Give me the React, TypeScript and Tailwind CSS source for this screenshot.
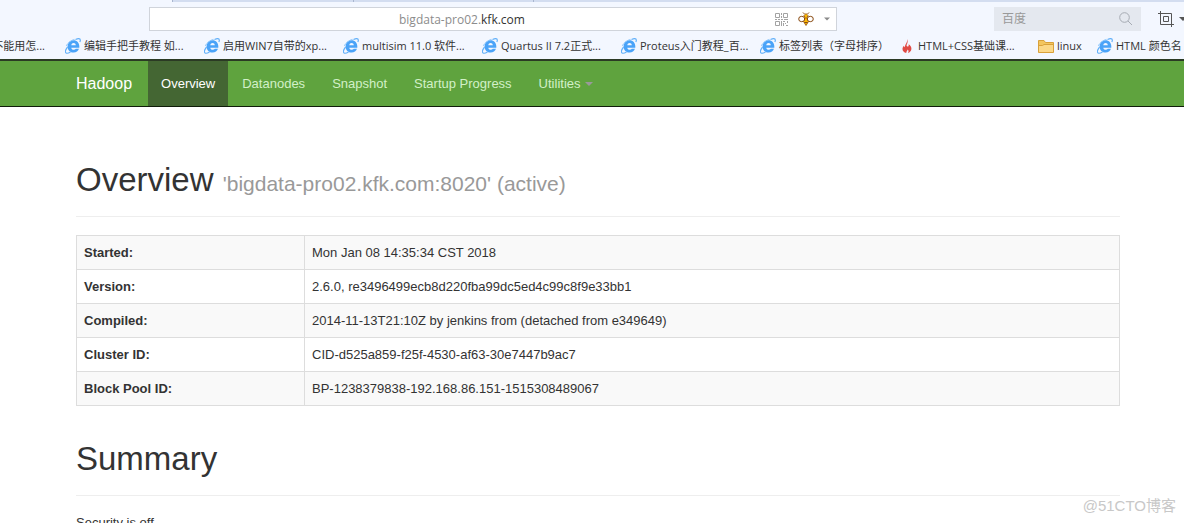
import { clsx } from "clsx";

type BookmarkIcon = "ie" | "flame" | "folder";

interface Bookmark {
  title: string;
  icon: BookmarkIcon;
  width: string;
}

const bookmarks: Bookmark[] = [
  { title: "编辑手把手教程 如...", icon: "ie", width: "w-[139px]" },
  { title: "启用WIN7自带的xp...", icon: "ie", width: "w-[139px]" },
  { title: "multisim 11.0 软件...", icon: "ie", width: "w-[139px]" },
  { title: "Quartus II 7.2正式...", icon: "ie", width: "w-[139px]" },
  { title: "Proteus入门教程_百...", icon: "ie", width: "w-[139px]" },
  { title: "标签列表（字母排序）", icon: "ie", width: "w-[139px]" },
  { title: "HTML+CSS基础课...", icon: "flame", width: "w-[139px]" },
  { title: "linux", icon: "folder", width: "w-[59px]" },
  { title: "HTML 颜色名", icon: "ie", width: "w-[139px]" },
];

const navLinks = [
  { name: "Overview", href: "#tab-overview", active: true },
  { name: "Datanodes", href: "#tab-datanode", active: false },
  { name: "Snapshot", href: "#tab-snapshot", active: false },
  { name: "Startup Progress", href: "#tab-startup-progress", active: false },
];

const overviewRows = [
  { label: "Started:", value: "Mon Jan 08 14:35:34 CST 2018" },
  { label: "Version:", value: "2.6.0, re3496499ecb8d220fba99dc5ed4c99c8f9e33bb1" },
  { label: "Compiled:", value: "2014-11-13T21:10Z by jenkins from (detached from e349649)" },
  { label: "Cluster ID:", value: "CID-d525a859-f25f-4530-af63-30e7447b9ac7" },
  { label: "Block Pool ID:", value: "BP-1238379838-192.168.86.151-1515308489067" },
];

function IeIcon() {
  return (
    <svg viewBox="0 0 16 16" className="size-4 shrink-0" fill="none" aria-hidden="true">
      <path
        d="M8.500 2.200C12 2.200 14.300 4.800 14.300 8.300V9.700H6.300C6.500 11 7.400 11.800 8.700 11.800 9.700 11.800 10.400 11.400 10.800 10.800H14C13.200 13.100 11.300 14.500 8.600 14.500 5 14.500 2.600 12 2.600 8.400 2.600 4.800 5 2.200 8.500 2.200ZM6.300 7.300H10.800C10.700 5.900 9.800 5 8.600 5 7.300 5 6.500 5.900 6.300 7.300Z"
        fill="#4aa3f8"
      />
      <path
        d="M10.500 1.500C13 .3 15.200 .2 15.300 1.900c.1.700-.1 1.400-.5 2.100M2.600 8.800C.6 11.600 0 14.200 1.100 15c.9.6 2.700 0 4.400-1.100"
        stroke="#62b0f9"
        strokeWidth="1.200"
      />
      <path d="M1.300 7.800C2.600 5 5.800 2.300 9.500 1.400" stroke="#8cc6fb" />
    </svg>
  );
}

function FlameIcon() {
  return (
    <svg viewBox="0 0 10 14" className="h-[14px] w-[10px] shrink-0" aria-hidden="true">
      <path
        d="M5.200 0C6 2.200 5.600 3.800 4.900 5.300 4.300 6.500 4.600 7.300 5.500 7.600c1 .2 1.300-.9 1.200-2.300 1.900 1.300 2.900 3 2.700 4.800C9.200 12.200 7.800 13.500 6 14c.8-1.300.7-2.400-.3-3.500-.3 1.200-1.200 1.700-1.500 3.500C2 13.300.5 12 .5 9.900c0-1.300.6-2.300 1.400-3.200.1.800.4 1.300.9 1.500C3 5.300 5.500 3.700 5.200 0Z"
        fill="#e04a44"
      />
    </svg>
  );
}

function FolderIcon() {
  return (
    <svg viewBox="0 0 16 14" className="h-[14px] w-4 shrink-0" aria-hidden="true">
      <path d="M.5 13.500V1.500H6L7.500 3.500H15.500V13.500Z" fill="#f3c65f" stroke="#d9a13a" />
      <path d="M1 6.500H4.500L6 5.500H15V13H1Z" fill="#fbd887" />
      <path d="M1 6.500H4.500L6 5.500H15.500" fill="none" stroke="#d9a13a" />
    </svg>
  );
}

function BeeIcon() {
  return (
    <svg viewBox="0 0 16 14" className="h-[14px] w-4" fill="none" aria-hidden="true">
      <path d="M6.500 2L5 .5M9.500 2L11 .5" stroke="#8a4b12" />
      <path d="M8 1.500L10 3.500 8.800 6 10.500 9.500 8 13.500 5.500 9.500 7.200 6 6 3.500Z" fill="#fdb900" stroke="#8a4b12" strokeWidth=".8" />
      <ellipse cx="3.700" cy="7" rx="3" ry="2.700" fill="#fff" stroke="#8a4b12" />
      <ellipse cx="12.300" cy="7" rx="3" ry="2.700" fill="#fff" stroke="#8a4b12" />
      <path d="M6.300 10.500H9.700" stroke="#8a4b12" />
    </svg>
  );
}

function QrIcon() {
  return (
    <svg viewBox="0 0 13 13" className="size-[13px]" fill="none" stroke="#a3a3a3" aria-hidden="true">
      <path d="M.5 .5H4.500V4.500H.5ZM8.500 .5H12.500V4.500H8.500ZM.5 8.500H4.500V12.500H.5Z" />
      <path d="M6.500 0V2M6.500 3V5M0 6.500H2M3 6.500H5M6 6.500H8M9 6.500H13M6.500 8V13M8 8.500H10M8.500 10V13M10 10.500H11M12.500 8V10M11 12.500H13" />
    </svg>
  );
}

function Caret({ className }: { className?: string }) {
  return (
    <svg viewBox="0 0 8 4" className={clsx("h-1", className)} fill="currentColor" aria-hidden="true">
      <path d="M0 0H8L4 4Z" />
    </svg>
  );
}

function BrowserBar() {
  return (
    <div className="bg-[#f3f7ff] font-['Open_Sans','Noto_Sans_CJK_SC',sans-serif] text-[#333]">
      {/* bottom edge of the tab strip */}
      <div className="flex h-[2px] bg-[#d3ddf0]">
        <div className="w-[173px] border-r border-[#a9b6cf] bg-[#f3f7ff]" />
        <div className="w-[181px] border-r border-[#a9b6cf]" />
        <div className="w-[180px] border-r border-[#a9b6cf]" />
      </div>

      <div className="flex h-[34px] items-center pl-[149px]">
        <div className="flex h-6 min-w-0 flex-1 items-center border border-[#d0d4db] bg-white pr-[6px]">
          <button
            type="button"
            aria-label="Address"
            className="h-full min-w-0 flex-1 truncate pl-[249px] text-left text-[12px] leading-6"
          >
            <span className="text-[#8c8c8c]">bigdata-pro02.</span>kfk.com
          </button>
          <button type="button" aria-label="QR code" className="mr-[10px]">
            <QrIcon />
          </button>
          <button type="button" aria-label="Extensions" className="mr-[10px]">
            <BeeIcon />
          </button>
          <button type="button" aria-label="Address history">
            <Caret className="w-[6px] text-[#8a8a8a]" />
          </button>
        </div>

        <form className="ml-[157px] flex h-6 w-[147px] shrink-0 items-center bg-[#e4e8ef] px-2">
          <input
            type="text"
            aria-label="百度"
            placeholder="百度"
            className="min-w-0 flex-1 bg-transparent text-[12px] leading-5 outline-none placeholder:text-[#999]"
          />
          <button type="button" aria-label="Search">
            <svg viewBox="0 0 14 14" className="size-[14px]" fill="none" stroke="#a6abb3" aria-hidden="true">
              <circle cx="5.500" cy="5.500" r="4.800" />
              <path d="M9 9L13 13" />
            </svg>
          </button>
        </form>

        <button
          type="button"
          aria-label="Screenshot"
          className="ml-[17px] flex w-[26px] shrink-0 items-center gap-[5px] overflow-hidden text-[#555]"
        >
          <svg viewBox="0 0 16 16" className="size-4 shrink-0" fill="none" stroke="currentColor" aria-hidden="true">
            <path d="M0 2.500H13.500V16M2.500 0V13.500H16" />
            <path d="M5.500 5.500H10.500V10.500H5.500Z" />
          </svg>
          <Caret className="w-2 shrink-0" />
        </button>
      </div>

      <div className="flex h-[23px] overflow-hidden text-[11px] leading-5 whitespace-nowrap">
        <a href="#" className="flex w-[65px] shrink-0 justify-end pr-5">
          不能用怎...
        </a>
        {bookmarks.map((bookmark) => (
          <a
            key={bookmark.title}
            href="#"
            className={clsx("flex h-5 shrink-0 items-center gap-[3px]", bookmark.width)}
          >
            {bookmark.icon === "ie" && <IeIcon />}
            {bookmark.icon === "flame" && (
              <span className="flex w-4 justify-center">
                <FlameIcon />
              </span>
            )}
            {bookmark.icon === "folder" && <FolderIcon />}
            {bookmark.title}
          </a>
        ))}
      </div>
    </div>
  );
}

function Navbar() {
  return (
    <nav className="flex h-12 items-stretch border-t-2 border-b border-t-[#2b3a24] border-b-[#101c0a] bg-[#5fa33e] pl-[76px] text-[13px]">
      <a href="#" className="flex items-center pr-4 text-[16px] text-white">
        Hadoop
      </a>
      <ul className="flex gap-px">
        {navLinks.map((link) => (
          <li key={link.name} className="flex">
            <a
              href={link.href}
              className={clsx(
                "flex items-center px-[13px]",
                link.active ? "bg-[#446633] text-white" : "text-[#d2f0c8]"
              )}
            >
              {link.name}
            </a>
          </li>
        ))}
        <li className="flex">
          <button type="button" className="flex items-center gap-1 px-[13px] text-[#d2f0c8]">
            Utilities
            <Caret className="w-2 text-[#999]" />
          </button>
        </li>
      </ul>
    </nav>
  );
}

function PageHeader({ title, detail }: { title: string; detail?: string }) {
  return (
    <div className="mb-[18px] border-b border-[#eee] pb-[18px]">
      <h1 className="text-[33px] leading-9">
        {title} {detail && <small className="text-[21px] leading-none text-[#999]">{detail}</small>}
      </h1>
    </div>
  );
}

export default function App() {
  return (
    <div className="relative h-screen overflow-hidden bg-white font-['Liberation_Sans',Arial,sans-serif] text-[13px] text-[#333]">
      <BrowserBar />
      <Navbar />

      <main className="pt-[55px] pr-16 pl-[76px]">
        <PageHeader title="Overview" detail="'bigdata-pro02.kfk.com:8020' (active)" />

        <table className="mb-[35px] w-full border-collapse border border-[#ddd] leading-[17px]">
          <tbody>
            {overviewRows.map((row) => (
              <tr key={row.label} className="odd:bg-[#f9f9f9]">
                <th scope="row" className="w-[228px] border border-[#ddd] px-[7px] py-2 text-left font-bold">
                  {row.label}
                </th>
                <td className="border border-[#ddd] px-[7px] py-2">{row.value}</td>
              </tr>
            ))}
          </tbody>
        </table>

        <PageHeader title="Summary" />
        <p className="leading-[18px]">Security is off.</p>
      </main>

      <div className="absolute right-2 bottom-2 font-['Liberation_Sans','Noto_Sans_CJK_SC',sans-serif] text-[15px] leading-[18px] text-[#c8c8c8]">
        @51CTO博客
      </div>
    </div>
  );
}
